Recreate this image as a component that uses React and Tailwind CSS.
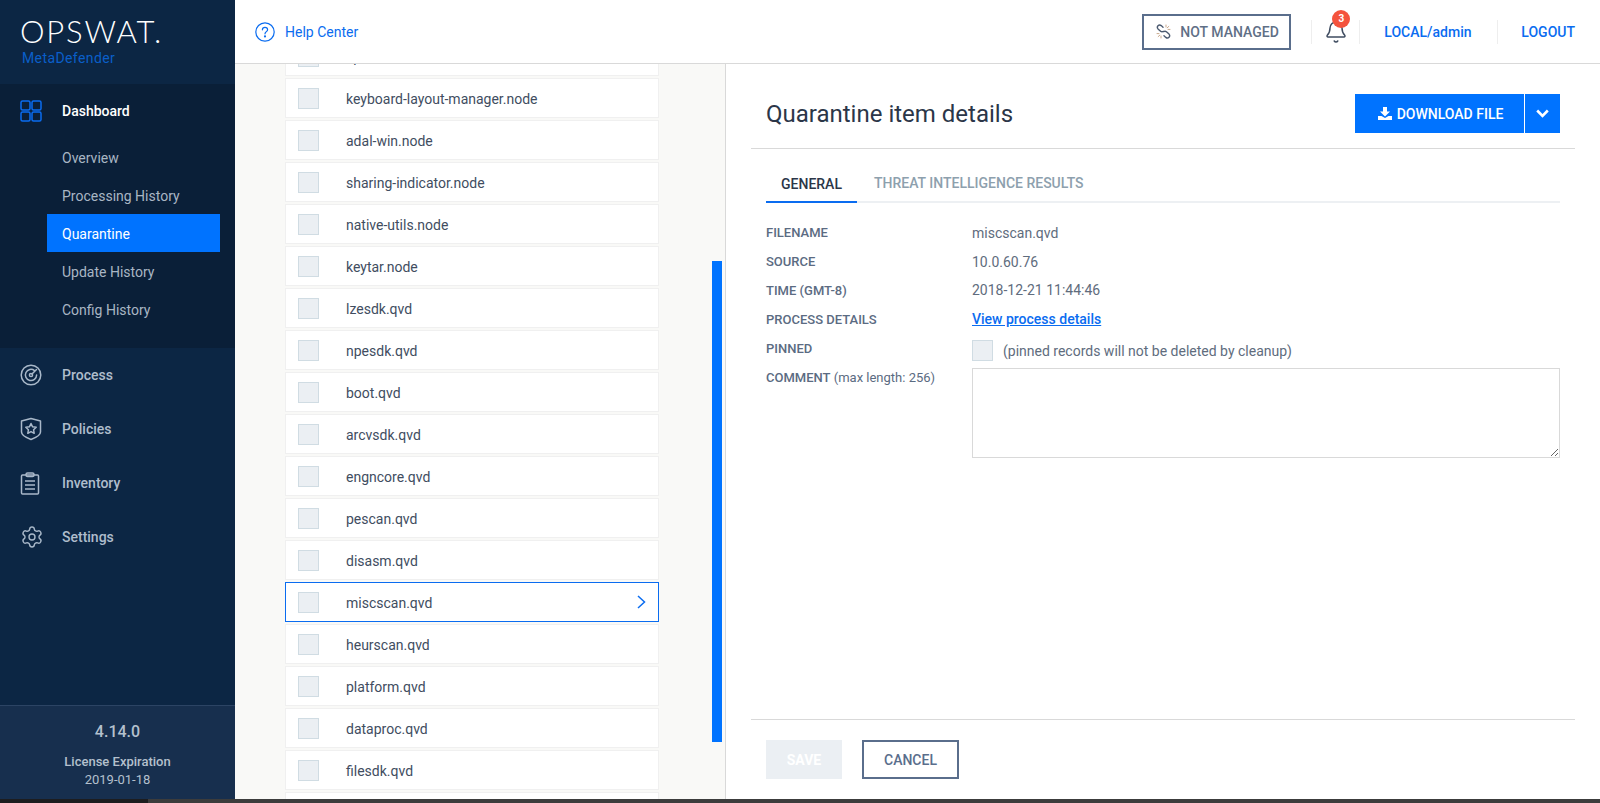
import React from 'react';
import { Settings, Bell } from 'lucide-react';

const files = [
  'spellchecker.node', 'keyboard-layout-manager.node', 'adal-win.node', 'sharing-indicator.node', 'native-utils.node',
  'keytar.node', 'lzesdk.qvd', 'npesdk.qvd', 'boot.qvd', 'arcvsdk.qvd', 'engncore.qvd', 'pescan.qvd',
  'disasm.qvd', 'miscscan.qvd', 'heurscan.qvd', 'platform.qvd', 'dataproc.qvd', 'filesdk.qvd', 'mcafee.qvd',
];

const subItems = ['Overview', 'Processing History', 'Quarantine', 'Update History', 'Config History'];

const GridIcon = () => (
  <svg width="22" height="22" viewBox="0 0 22 22" fill="none" stroke="#0a6cf0" strokeWidth="1.5">
    <rect x="1" y="1" width="9" height="9" rx="1.5" />
    <rect x="12" y="1" width="9" height="9" rx="1.5" />
    <rect x="1" y="12" width="9" height="9" rx="1.5" />
    <rect x="12" y="12" width="9" height="9" rx="1.5" />
  </svg>
);

const TargetIcon = () => (
  <svg width="22" height="22" viewBox="0 0 22 22" fill="none" stroke="#a9b8c9" strokeWidth="1.5" strokeLinecap="round">
    <circle cx="11" cy="11" r="9.8" />
    <path d="M14.5 6.6A5.6 5.6 0 1 0 16.6 11" />
    <circle cx="11" cy="11" r="1.6" />
    <path d="M12 10L16.5 5.5" />
  </svg>
);

const ShieldIcon = () => (
  <svg width="22" height="24" viewBox="0 0 22 24" fill="none" stroke="#a9b8c9" strokeWidth="1.5" strokeLinejoin="round">
    <path d="M11 1.5L20.5 4V15C20.5 18 15 21 11 22.5C7 21 1.5 18 1.5 15V4Z" />
    <path d="M11 6.5L12.6 9.8L16.2 10.3L13.6 12.8L14.2 16.3L11 14.6L7.8 16.3L8.4 12.8L5.8 10.3L9.4 9.8Z" />
  </svg>
);

const ClipboardIcon = () => (
  <svg width="20" height="23" viewBox="0 0 20 23" fill="none" stroke="#a9b8c9" strokeWidth="1.5">
    <rect x="1.5" y="3" width="17" height="19" rx="1" />
    <rect x="6" y="1" width="8" height="3.5" rx="1.5" />
    <path d="M5 9H15M5 13H15M5 17H15" />
  </svg>
);

const HelpIcon = () => (
  <svg width="20" height="20" viewBox="0 0 20 20" fill="none" stroke="#0a6cf0" strokeWidth="1.2" strokeLinecap="round">
    <circle cx="10" cy="10" r="9.2" />
    <path d="M7.4 7.8C7.4 6.3 8.6 5.4 10 5.4C11.5 5.4 12.6 6.3 12.6 7.7C12.6 9.6 10 9.7 10 11.8" />
    <circle cx="10" cy="14.4" r="0.5" />
  </svg>
);

const BrokenLinkIcon = () => (
  <svg width="15" height="15" viewBox="0 0 15 15" fill="none" strokeLinecap="round">
    <path d="M7 3.2L5.2 1.6C4.2 0.8 2.8 0.9 2 1.8C1.2 2.7 1.2 4 2 4.9L4.6 7.2C5.4 7.9 6.5 7.9 7.4 7.4" stroke="#4b5a70" strokeWidth="1.4" />
    <path d="M8 11.8L9.8 13.4C10.8 14.2 12.2 14.1 13 13.2C13.8 12.3 13.8 11 13 10.1L10.4 7.8C9.6 7.1 8.5 7.1 7.6 7.6" stroke="#4b5a70" strokeWidth="1.4" />
    <path d="M10 1V3M12.8 2.4L11.2 3.8M14 5.4H12M1 9.6H3M2.2 12.6L3.8 11.2M5 14V12" stroke="#c9a98e" strokeWidth="1" />
  </svg>
);

const DownloadIcon = () => (
  <svg width="14" height="13" viewBox="0 0 14 13" fill="#fff">
    <path d="M5 0H9V4.5H12L7 9.5L2 4.5H5Z" />
    <path d="M0 9H3.5L7 11L10.5 9H14V13H0Z" />
  </svg>
);

const ChevronBold = () => (
  <svg width="13" height="9" viewBox="0 0 13 9" fill="none" stroke="#fff" strokeWidth="2.6">
    <path d="M1.2 1.5L6.5 6.8L11.8 1.5" />
  </svg>
);

const RowChevron = () => (
  <svg width="9" height="14" viewBox="0 0 9 14" fill="none" stroke="#0a6cf0" strokeWidth="1.5" className="ml-auto">
    <path d="M1 1L7.5 7L1 13" />
  </svg>
);

const Box = () => <span className="block w-[21px] h-[21px] shrink-0 bg-[#ebeff3] border border-[#d0dce3]" />;

const MainItem = ({ icon, label }) => (
  <div className="h-[54px] flex items-center">
    <div className="w-[62px] pl-[20px] flex items-center">{icon}</div>
    <span className="text-sm font-medium text-[#afbdcc]">{label}</span>
  </div>
);

const Field = ({ label, children }) => (
  <div className="h-[29px] flex items-center">
    <div className="w-[206px] text-[13px] font-medium text-[#5b6b82]">{label}</div>
    {children}
  </div>
);

export default function App() {
  return (
    <div className="w-[1600px] h-[803px] overflow-hidden flex flex-col font-['Roboto',sans-serif]">
      <div className="h-[799px] flex">
        {/* sidebar */}
        <aside className="w-[235px] shrink-0 bg-[#0c2644] flex flex-col">
          <div className="h-[84px] pl-[20px] pt-[13px]">
            <div className="font-['Lato',sans-serif] font-light text-[31px] leading-[36px] tracking-[1.8px] text-white">OPSWAT.</div>
            <div className="text-sm leading-[16px] tracking-[0.4px] text-[#0a5fc9] pl-[2px] mt-[1px]">MetaDefender</div>
          </div>
          <div className="h-[264px] bg-[#0a1f38]">
            <div className="h-[54px] flex items-center">
              <div className="w-[62px] pl-[20px] flex items-center"><GridIcon /></div>
              <span className="text-sm font-medium text-white">Dashboard</span>
            </div>
            <div className="pl-[47px] pr-[15px]">
              {subItems.map((item) => (
                <div
                  key={item}
                  className={`h-[38px] pl-[15px] pt-[2px] flex items-center text-sm ${item === 'Quarantine' ? 'bg-[#0073ff] text-white' : 'text-[#a9b6c4]'}`}
                >
                  {item}
                </div>
              ))}
            </div>
          </div>
          <div className="flex-1">
            <MainItem icon={<TargetIcon />} label="Process" />
            <MainItem icon={<ShieldIcon />} label="Policies" />
            <MainItem icon={<ClipboardIcon />} label="Inventory" />
            <MainItem icon={<Settings size={24} strokeWidth={1.4} color="#a9b8c9" />} label="Settings" />
          </div>
          <div className="h-[94px] bg-[#172f4e] border-t border-[#2c4464] flex flex-col items-center text-[#b4c0cd]">
            <div className="text-base font-medium mt-[16px] leading-[20px]">4.14.0</div>
            <div className="text-[13px] font-medium mt-[12px] leading-[16px]">License Expiration</div>
            <div className="text-[13px] leading-[16px] mt-[2px]">2019-01-18</div>
          </div>
        </aside>

        <div className="flex-1 min-w-0 flex flex-col">
          {/* top bar */}
          <header className="h-[64px] shrink-0 bg-white border-b border-[#d9d9d9] flex items-center pl-[20px]">
            <HelpIcon />
            <span className="ml-[10px] text-sm text-[#0a6cf0]">Help Center</span>
            <div className="ml-auto flex items-center">
              <div className="h-[36px] w-[149px] border-2 border-[#5a6e8c] flex items-center pl-[12px] text-sm font-medium text-[#5f6f86]">
                <BrokenLinkIcon />
                <span className="ml-[9px]">NOT MANAGED</span>
              </div>
              <div className="w-px h-[24px] bg-[#eeeeee] ml-[20px]" />
              <div className="relative w-[47px] flex justify-center pl-[1px]">
                <Bell size={24} strokeWidth={1.5} color="#3f4c60" />
                <span className="absolute left-[20px] -top-[10px] w-[18px] h-[18px] rounded-full bg-[#f4533d] text-white text-[10px] font-bold flex items-center justify-center">3</span>
              </div>
              <div className="w-px h-[24px] bg-[#eeeeee]" />
              <span className="ml-[24px] w-[87px] text-sm font-medium text-[#0a6cf0]">LOCAL/admin</span>
              <div className="w-px h-[24px] bg-[#eeeeee] ml-[26px]" />
              <span className="ml-[23px] mr-[25px] text-sm font-medium text-[#0a6cf0]">LOGOUT</span>
            </div>
          </header>

          <div className="flex-1 min-h-0 flex">
            {/* file list */}
            <div className="relative w-[490px] shrink-0 bg-[#f9f9f7] overflow-hidden border-r border-[#d9d9d9] box-content">
              <div className="-mt-[28px] pl-[50px] w-[424px] flex flex-col gap-[2px]">
                {files.map((name) => {
                  const selected = name === 'miscscan.qvd';
                  return (
                    <div
                      key={name}
                      className={`h-[40px] shrink-0 bg-white flex items-center pl-[12px] pr-[12px] ${selected ? 'border border-[#0a6cf0]' : 'border border-[#f0f0f0]'}`}
                    >
                      <Box />
                      <span className="ml-[27px] pt-[2px] text-sm text-[#414d5f]">{name}</span>
                      {selected && <RowChevron />}
                    </div>
                  );
                })}
              </div>
              <div className="absolute left-[477px] top-[197px] w-[10px] h-[481px] bg-[#0073ff]" />
            </div>

            {/* details */}
            <main className="flex-1 min-w-0 bg-white pl-[25px] pr-[25px] flex flex-col">
              <div className="h-[85px] shrink-0 border-b border-[#d9d9d9] flex items-start">
                <h1 className="ml-[15px] mt-[33px] text-2xl leading-[34px] font-normal text-[#2b3648]">Quarantine item details</h1>
                <div className="ml-auto mr-[15px] mt-[30px] h-[39px] flex bg-[#0073ff] text-white">
                  <div className="w-[169px] pl-[2px] flex items-center justify-center gap-[5px] text-sm font-medium">
                    <DownloadIcon />
                    DOWNLOAD FILE
                  </div>
                  <div className="w-[36px] border-l border-white flex items-center justify-center">
                    <ChevronBold />
                  </div>
                </div>
              </div>

              <div className="px-[15px] flex-1 min-h-0">
                <div className="h-[54px] border-b-2 border-[#edf0f3] flex items-end text-sm font-medium">
                  <div className="w-[91px] h-[54px] -mb-[2px] border-b-2 border-[#0a6cf0] flex items-center justify-center text-[#2b3648] pt-[18px]">GENERAL</div>
                  <div className="h-[54px] ml-[17px] flex items-center text-[#8da0ad] pt-[18px]">THREAT INTELLIGENCE RESULTS</div>
                </div>
                <div className="mt-[15px]">
                  <Field label="FILENAME"><span className="text-sm text-[#606c7d]">miscscan.qvd</span></Field>
                  <Field label="SOURCE"><span className="text-sm text-[#606c7d]">10.0.60.76</span></Field>
                  <Field label="TIME (GMT-8)"><span className="pb-[2px] text-sm text-[#606c7d]">2018-12-21 11:44:46</span></Field>
                  <Field label="PROCESS DETAILS"><span className="mb-[2px] text-sm font-medium text-[#0a6cf0] underline">View process details</span></Field>
                  <Field label="PINNED">
                    <div className="flex items-center mt-[4px]">
                      <Box />
                      <span className="ml-[10px] text-sm text-[#606c7d]">(pinned records will not be deleted by cleanup)</span>
                    </div>
                  </Field>
                </div>
                <div className="flex items-start mt-[5px]">
                  <div className="w-[206px] text-[13px] text-[#5b6b82]"><span className="font-medium">COMMENT</span> (max length: 256)</div>
                  <textarea className="block w-[588px] h-[90px] border border-[#d9d9d9] outline-none resize-y bg-white" />
                </div>
              </div>

              <div className="h-[80px] shrink-0 border-t border-[#d9d9d9] px-[15px] pt-[20px] flex items-start gap-[20px] text-sm font-medium">
                <div className="w-[76px] h-[39px] bg-[#ebeff3] text-white flex items-center justify-center font-bold">SAVE</div>
                <div className="w-[97px] h-[39px] border-2 border-[#5a6e8c] text-[#5a6e8c] flex items-center justify-center">CANCEL</div>
              </div>
            </main>
          </div>
        </div>
      </div>
      <div className="h-[4px] bg-[#3c3c3c] flex"><div className="w-[148px] bg-[#1d1d1f]" /></div>
    </div>
  );
}
